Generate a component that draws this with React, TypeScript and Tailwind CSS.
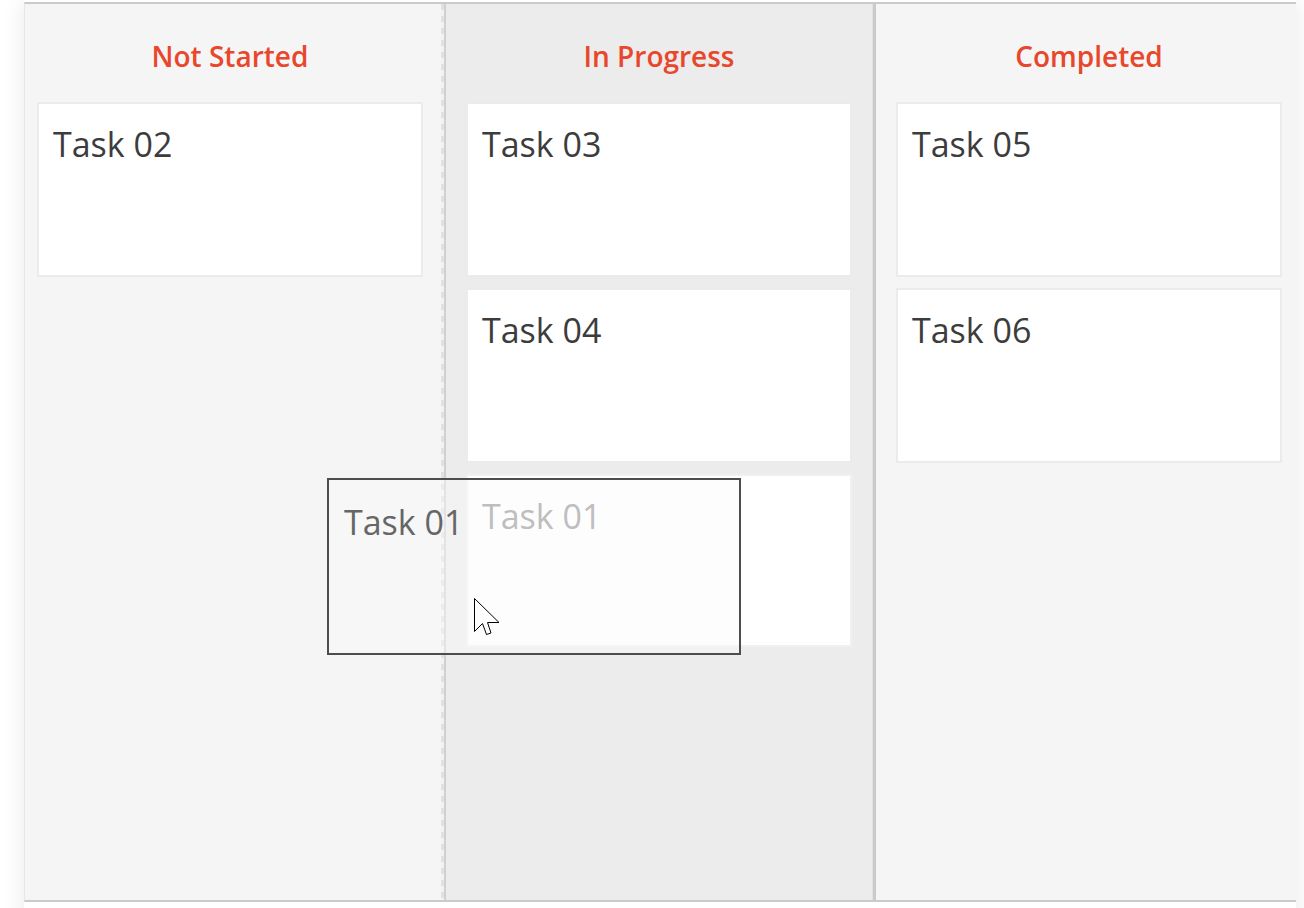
import React from "react";

const font = { fontFamily: '"Open Sans", "Noto Sans", sans-serif' };

function Card({ label, faded }: { label: string; faded?: boolean }) {
  return (
    <div
      className={
        "w-[386px] bg-white border-2 pl-[14px] pt-[23px] " +
        (faded ? "h-[173px] border-[#f0f0f0]" : "h-[175px] border-[#ebebeb]")
      }
    >
      <div
        className={
          "text-[34px] leading-[34px] " +
          (faded ? "text-[#8c8c8c]" : "text-[#3c3c3c]")
        }
      >
        {label}
      </div>
    </div>
  );
}

function Header({ title }: { title: string }) {
  return (
    <div className="w-[386px] text-center pt-[38px] pb-[32px] text-[28px] leading-[28px] font-semibold text-[#e8472b]">
      {title}
    </div>
  );
}

export default function App() {
  return (
    <div className="relative w-[1304px] h-[908px] overflow-hidden bg-white" style={font}>
      <div className="ml-[24px] w-[1272px] h-[1000px] bg-white pt-[2px] shadow-[0_0_22px_rgba(0,0,0,0.09)]">
        <div className="flex h-[900px] border-t-2 border-b-2 border-[#cacaca] border-l border-l-[#e6e6e6]">
          {/* Column 1 */}
          <div className="w-[416px] bg-[#f5f5f5] pl-[12px] flex flex-col">
            <Header title="Not Started" />
            <Card label="Task 02" />
          </div>
          <div className="w-[3px] bg-[#f2f2f2] bg-[repeating-linear-gradient(to_bottom,#e1e1e1_0px,#e1e1e1_6px,#f2f2f2_6px,#f2f2f2_12px)]" />
          {/* Column 2 */}
          <div className="w-[429px] bg-[#ececec] border-l-2 border-l-[#d0d0d0] border-r border-r-[#e2e2e2] pl-[20px] flex flex-col">
            <Header title="In Progress" />
            <div className="flex flex-col gap-[11px]">
              <Card label="Task 03" />
              <Card label="Task 04" />
              <Card label="Task 01" faded />
            </div>
          </div>
          {/* Column 3 */}
          <div className="w-[423px] bg-[#f5f5f5] border-l-[3px] border-l-[#cacaca] pl-[20px] flex flex-col">
            <Header title="Completed" />
            <div className="flex flex-col gap-[11px]">
              <Card label="Task 05" />
              <Card label="Task 06" />
            </div>
          </div>
        </div>
      </div>

      {/* Drag ghost */}
      <div className="absolute left-[327px] top-[478px] w-[414px] h-[177px] border-2 border-[#4d4d4d] bg-[rgba(250,250,250,0.45)] pl-[15px] pt-[25px]">
        <div className="text-[34px] leading-[34px] text-[#666666]">Task 01</div>
      </div>

      {/* Cursor */}
      <svg
        className="absolute left-[473px] top-[597px]"
        width="28"
        height="40"
        viewBox="0 0 28 40"
      >
        <path
          d="M1.5 1.5 L1.5 34.5 L9.5 26.5 L13.5 37.5 L18 36 L14.5 25.5 L26 25.5 Z"
          fill="#ffffff"
          stroke="#000000"
          strokeWidth="1"
          strokeLinejoin="miter"
        />
      </svg>
    </div>
  );
}
